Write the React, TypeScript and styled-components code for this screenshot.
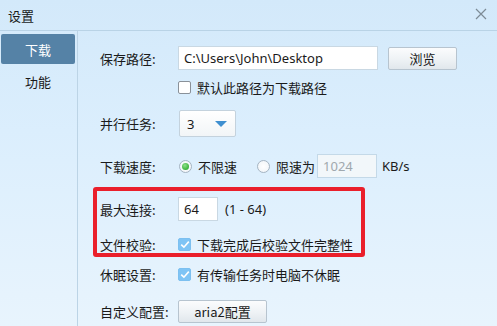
import React from 'react'
import styled, { createGlobalStyle } from 'styled-components'

const GlobalStyle = createGlobalStyle`
  html, body {
    margin: 0;
    padding: 0;
    background: #e4f2fc;
  }
  body {
    font-family: "Noto Sans CJK SC", "Microsoft YaHei", "Noto Sans", sans-serif;
    font-size: 13px;
    color: #1a1a1a;
  }
`

const Window = styled.div`
  width: 497px;
  height: 326px;
  display: flex;
  flex-direction: column;
  background: linear-gradient(180deg, #d3e9fa 0%, #dbeefd 40%, #e8f4fd 100%);
  overflow: hidden;
`

const TitleBar = styled.div`
  height: 30px;
  flex: none;
  display: flex;
  align-items: center;
  justify-content: space-between;
  padding: 0 8px 0 8px;
  border-bottom: 1px solid #b9d3e6;
  font-size: 13px;
`

const CloseButton = styled.div`
  width: 16px;
  height: 16px;
  display: flex;
  align-items: center;
  justify-content: center;
  margin-top: -2px;
`

const Body = styled.div`
  flex: 1;
  display: flex;
`

const Sidebar = styled.div`
  width: 78px;
  flex: none;
  border-right: 1px solid #bcd4e6;
  padding: 3px 0 0 1px;
  box-sizing: border-box;
  display: flex;
  flex-direction: column;
  gap: 2px;
`

const NavItem = styled.div<{ active?: boolean }>`
  width: 74px;
  height: 30px;
  border-radius: 2px;
  display: flex;
  align-items: center;
  justify-content: center;
  background: ${p => (p.active ? '#5582a6' : 'transparent')};
  color: ${p => (p.active ? '#ffffff' : '#1a1a1a')};
`

const Content = styled.div`
  flex: 1;
  padding: 15px 0 0 22px;
  display: flex;
  flex-direction: column;
`

const Row = styled.div<{ h: number; mt?: number }>`
  height: ${p => p.h}px;
  margin-top: ${p => p.mt || 0}px;
  display: flex;
  align-items: center;
`

const Label = styled.div`
  width: 78px;
  flex: none;
  white-space: nowrap;
`

const TextInput = styled.div<{ w: number; disabled?: boolean }>`
  width: ${p => p.w}px;
  height: 24px;
  box-sizing: border-box;
  border: 1px solid ${p => (p.disabled ? '#c4d9e8' : '#c9d8e3')};
  background: ${p => (p.disabled ? '#f2f7fa' : '#ffffff')};
  color: ${p => (p.disabled ? '#a0a8ae' : '#1a1a1a')};
  padding-left: 5px;
  display: flex;
  align-items: center;
  font-family: "Noto Sans", "Noto Sans CJK SC", sans-serif;
  font-size: 13px;
`

const Button = styled.div<{ w: number }>`
  width: ${p => p.w}px;
  height: 23px;
  box-sizing: border-box;
  border: 1px solid #b7c4cf;
  border-radius: 2px;
  background: linear-gradient(180deg, #fbfcfd 0%, #eef2f5 55%, #e1e7ec 100%);
  display: flex;
  align-items: center;
  justify-content: center;
`

const CheckRow = styled.label`
  display: flex;
  align-items: center;
  gap: 6px;
  white-space: nowrap;
`

const CheckBox = styled.span<{ checked?: boolean }>`
  width: 13px;
  height: 13px;
  box-sizing: border-box;
  border-radius: 2px;
  border: 1px solid ${p => (p.checked ? '#7cc0f0' : '#8a9199')};
  background: ${p => (p.checked ? '#7fc4f5' : '#ffffff')};
  display: flex;
  align-items: center;
  justify-content: center;
`

const Radio = styled.span<{ checked?: boolean }>`
  width: 13px;
  height: 13px;
  box-sizing: border-box;
  border-radius: 50%;
  border: 1px solid #a5b4c2;
  background: radial-gradient(circle, #ffffff 0%, #eef3f7 100%);
  display: flex;
  align-items: center;
  justify-content: center;
  &::after {
    content: '';
    display: ${p => (p.checked ? 'block' : 'none')};
    width: 7px;
    height: 7px;
    border-radius: 50%;
    background: radial-gradient(circle at 40% 35%, #8fe08a 0%, #3bb33a 70%, #2c9a2c 100%);
  }
`

const Select = styled.div`
  width: 57px;
  height: 27px;
  box-sizing: border-box;
  margin-left: 1px;
  border: 1px solid #c4d2dd;
  border-radius: 2px;
  background: linear-gradient(180deg, #ffffff 0%, #f2f5f7 100%);
  display: flex;
  align-items: center;
  justify-content: space-between;
  padding: 0 8px 0 7px;
  font-family: "Noto Sans", sans-serif;
`

const Arrow = styled.span`
  width: 0;
  height: 0;
  border-left: 6px solid transparent;
  border-right: 6px solid transparent;
  border-top: 6px solid #3f8fd0;
`

const Note = styled.span<{ ml: number }>`
  margin-left: ${p => p.ml}px;
  white-space: nowrap;
  font-family: "Noto Sans", "Noto Sans CJK SC", sans-serif;
`

const RadioGroup = styled.div<{ ml?: number }>`
  display: flex;
  align-items: center;
  gap: 6px;
  margin-left: ${p => p.ml || 0}px;
  white-space: nowrap;
`

const Highlight = styled.div`
  margin: 9px 0 0 -7px;
  width: 272px;
  height: 70px;
  box-sizing: border-box;
  border: 4px solid #ea1f2b;
  border-radius: 3px;
  padding: 6px 0 0 3px;
  display: flex;
  flex-direction: column;
`

const Tick = () => (
  <svg width="10" height="9" viewBox="0 0 10 9">
    <path d="M1.2 4.6 L3.9 7.2 L8.8 1.6" fill="none" stroke="#ffffff" strokeWidth="1.6" />
  </svg>
)

export default function App() {
  return (
    <>
      <GlobalStyle />
      <Window>
        <TitleBar>
          <span>设置</span>
          <CloseButton>
            <svg width="12" height="12" viewBox="0 0 12 12">
              <path d="M1 1 L11 11 M11 1 L1 11" stroke="#7d8b96" strokeWidth="1.2" />
            </svg>
          </CloseButton>
        </TitleBar>
        <Body>
          <Sidebar>
            <NavItem active>下载</NavItem>
            <NavItem>功能</NavItem>
          </Sidebar>
          <Content>
            <Row h={24}>
              <Label>保存路径:</Label>
              <TextInput w={200}>C:\Users\John\Desktop</TextInput>
              <Button w={69} style={{ marginLeft: 10 }}>浏览</Button>
            </Row>
            <Row h={16} mt={9}>
              <Label />
              <CheckRow>
                <CheckBox />
                默认此路径为下载路径
              </CheckRow>
            </Row>
            <Row h={27} mt={15}>
              <Label>并行任务:</Label>
              <Select>
                <span>3</span>
                <Arrow />
              </Select>
            </Row>
            <Row h={24} mt={17}>
              <Label>下载速度:</Label>
              <RadioGroup ml={1}>
                <Radio checked />
                不限速
              </RadioGroup>
              <RadioGroup ml={20}>
                <Radio />
                限速为
              </RadioGroup>
              <TextInput w={60} disabled style={{ marginLeft: 2 }}>1024</TextInput>
              <Note ml={5}>KB/s</Note>
            </Row>
            <Highlight>
              <Row h={24}>
                <Label>最大连接:</Label>
                <TextInput w={40}>64</TextInput>
                <Note ml={7}>(1 - 64)</Note>
              </Row>
              <Row h={16} mt={15}>
                <Label>文件校验:</Label>
                <CheckRow>
                  <CheckBox checked>
                    <Tick />
                  </CheckBox>
                  下载完成后校验文件完整性
                </CheckRow>
              </Row>
            </Highlight>
            <Row h={16} mt={9}>
              <Label>休眠设置:</Label>
              <CheckRow>
                <CheckBox checked>
                  <Tick />
                </CheckBox>
                有传输任务时电脑不休眠
              </CheckRow>
            </Row>
            <Row h={24} mt={17}>
              <Label>自定义配置:</Label>
              <Button w={89}>aria2配置</Button>
            </Row>
          </Content>
        </Body>
      </Window>
    </>
  )
}
